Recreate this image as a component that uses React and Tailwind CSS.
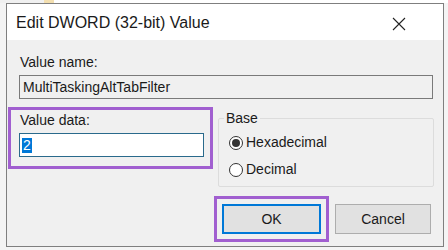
export default function App() {

    return (

        <div className="w-[448px] h-[250px] overflow-hidden bg-[#f4f4f4] font-['Liberation_Sans',Arial,sans-serif] text-[#1a1a1a]">

            <div className="h-[3px] flex">
                <div className="w-[44px] bg-[#f0f0f0]" />
                <div className="w-[10px] bg-[#f3dfb0]" />
                <div className="flex-1 bg-white" />
            </div>

            <div className="ml-[6px] w-[438px] h-[244px] border border-[#7f7f7f] bg-[#f0f0f0] flex flex-col">

                <div className="h-[36px] bg-white flex items-center justify-between">
                    <span className="pl-[9px] text-[16px] leading-[20px] mt-[2px]">
                        Edit DWORD (32-bit) Value
                    </span>
                    <svg className="mr-[37px] mt-[4px]" width="14" height="14" viewBox="0 0 14 14">
                        <path d="M1 1 L13 13 M13 1 L1 13" stroke="#222" strokeWidth="1.1" />
                    </svg>
                </div>

                <div className="flex flex-col">

                    <span className="ml-[13px] mt-[13px] text-[14px] leading-[19px]">
                        Value name:
                    </span>

                    <div className="mt-[3px] ml-[12px] mr-[10px] h-[24px] border border-[#7a7a7a] bg-[#f0f0f0] flex items-center px-[3px] text-[14px]">
                        MultiTaskingAltTabFilter
                    </div>

                    <div className="flex mt-[8px]">

                        <div className="ml-[1px] w-[205px] h-[62px] border-[3px] border-[#a15fd0] flex flex-col">
                            <span className="ml-[9px] mt-[1px] text-[14px] leading-[19px]">
                                Value data:
                            </span>
                            <div className="mt-[3px] ml-[8px] w-[185px] h-[24px] border border-[#2a6a8c] bg-white flex items-center px-[2px] text-[14px]">
                                <span className="bg-[#0078d7] text-white leading-[15px] px-[1px]">2</span>
                            </div>
                        </div>

                        <fieldset className="ml-[5px] mt-[2px] w-[216px] h-[78px] border border-[#dcdcdc] rounded-[2px] flex flex-col">
                            <legend className="ml-[5px] px-[2px] text-[14px] leading-[19px]">
                                Base
                            </legend>
                            <label className="flex items-center ml-[10px] mt-[5px] text-[14px] leading-[19px]">
                                <span className="w-[14px] h-[14px] rounded-full border border-[#333] bg-white flex items-center justify-center">
                                    <span className="w-[8px] h-[8px] rounded-full bg-[#333]" />
                                </span>
                                <span className="ml-[3px]">Hexadecimal</span>
                            </label>
                            <label className="flex items-center ml-[10px] mt-[8px] text-[14px] leading-[19px]">
                                <span className="w-[14px] h-[14px] rounded-full border border-[#333] bg-white" />
                                <span className="ml-[3px]">Decimal</span>
                            </label>
                        </fieldset>

                    </div>

                    <div className="flex mt-[9px] ml-[207px]">

                        <div className="w-[115px] h-[46px] border-[3px] border-[#a15fd0] p-[5px]">
                            <button className="w-[99px] h-[30px] border-2 border-[#0078d7] bg-[#e1e1e1] text-[14px] flex items-center justify-center">
                                OK
                            </button>
                        </div>

                        <button className="ml-[6px] mt-[8px] w-[96px] h-[30px] border border-[#adadad] bg-[#e1e1e1] text-[14px] flex items-center justify-center">
                            Cancel
                        </button>

                    </div>

                </div>

            </div>

        </div>

    );

}
